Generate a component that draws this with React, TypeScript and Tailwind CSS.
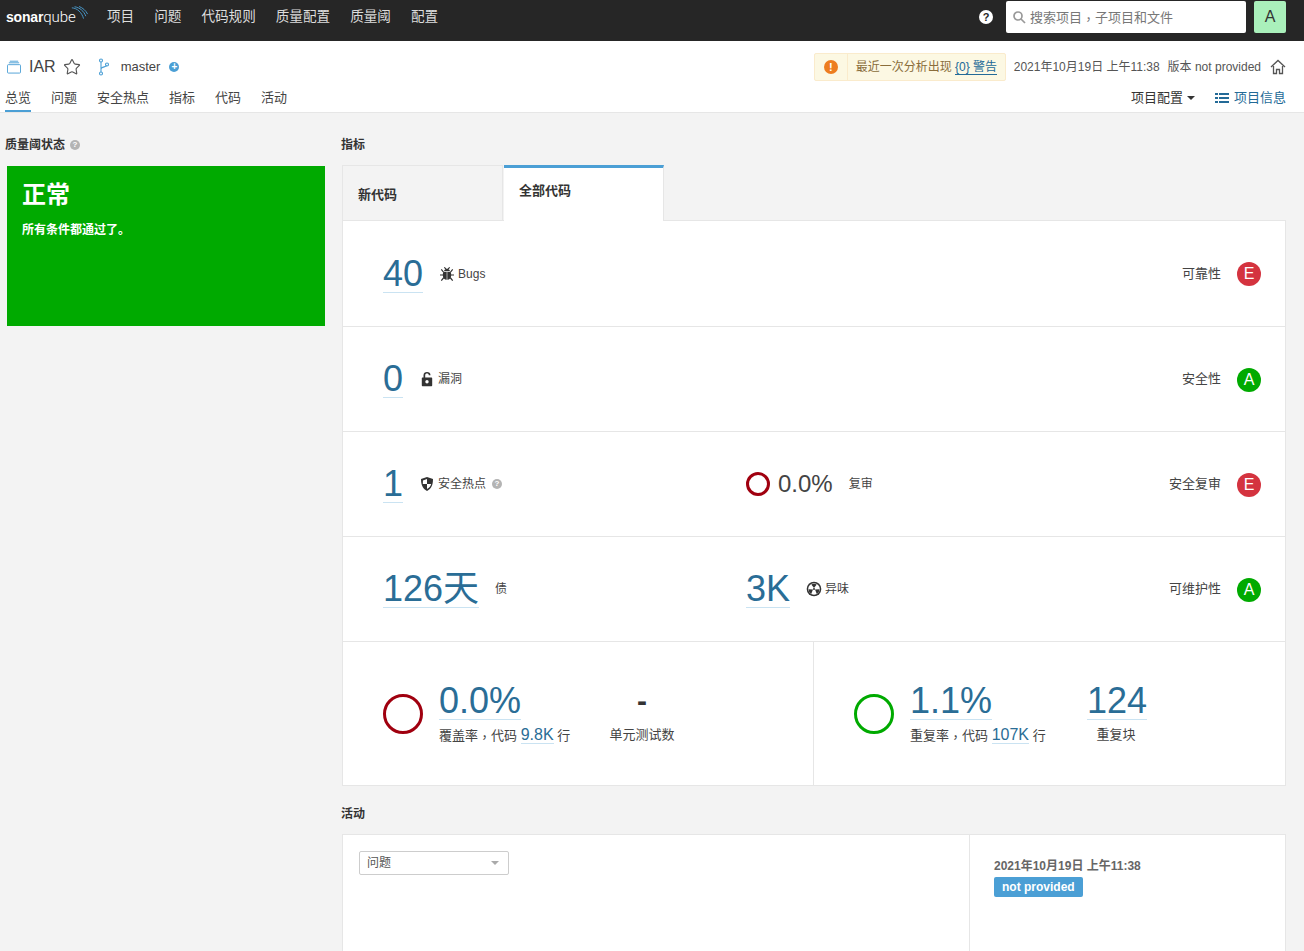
import React from 'react';
import { Star } from 'lucide-react';

const navItems = ['项目', '问题', '代码规则', '质量配置', '质量阈', '配置'];
const tabItems = ['总览', '问题', '安全热点', '指标', '代码', '活动'];

const BugIcon = () => (
  <svg className="w-4 h-4 shrink-0" viewBox="0 0 16 16" fill="#333">
    <path d="M5 5.200C5.200 3.700 6.500 2.800 8 2.800s2.800.9 3 2.400z" />
    <path d="M4.500 6h7c.5.8.7 1.800.7 2.900 0 2.800-1.700 4.800-3.700 4.800h-1c-2 0-3.700-2-3.700-4.800 0-1.100.2-2.100.7-2.900z" />
    <path d="M5.300 1.300l1.800 1.900M10.700 1.300L8.900 3.200M2.300 3.300l2.500 3.200M13.700 3.300l-2.500 3.200M1 9h3M15 9h-3M2.300 14.700l2.600-3.200M13.700 14.700l-2.600-3.200" stroke="#333" strokeWidth="1.200" fill="none" />
    <path d="M8 6v8" stroke="#fff" strokeWidth=".6" />
  </svg>
);

const LockIcon = () => (
  <svg className="w-4 h-4 shrink-0" viewBox="0 0 16 16" fill="#333">
    <path d="M4.500 6.500V4.200C4.500 2.200 6 1 8 1s3.500 1.200 3.500 3.200H9.800c0-1-.7-1.600-1.800-1.600s-1.800.6-1.800 1.600v2.300h6c.6 0 1 .4 1 1v6.700c0 .6-.4 1-1 1H3.800c-.6 0-1-.4-1-1V7.500c0-.6.4-1 1-1z" />
    <circle cx="8" cy="10.800" r="1.700" fill="#fff" />
  </svg>
);

const ShieldIcon = () => (
  <svg className="w-4 h-4 shrink-0" viewBox="0 0 16 16">
    <path d="M8 1l6 2.100c0 5.800-1.600 9.800-6 11.900C3.600 12.900 2 8.900 2 3.100z" fill="#333" />
    <path d="M8 3v5H3.800c.1-1.300.1-2.400.1-3.500zM8 8h4.200c-.6 2.300-2 3.900-4.200 5z" fill="#fff" />
  </svg>
);

const SmellIcon = () => (
  <svg className="w-4 h-4 shrink-0" viewBox="0 0 16 16">
    <circle cx="8" cy="8" r="7.300" fill="#333" />
    <circle cx="8" cy="8" r="5.800" fill="#fff" />
    <circle cx="8" cy="8" r="1" fill="#333" />
    <path d="M8 7L5.300 3.400A5.500 5.500 0 0 1 10.700 3.400zM9 8.500l4.500-.2a5.500 5.500 0 0 1-2.700 4.700zM7 8.500l-4.500-.2a5.500 5.500 0 0 0 2.700 4.700z" fill="#333" />
  </svg>
);

const HelpDot = ({ className }: { className: string }) => (
  <span className={`inline-flex items-center justify-center rounded-full bg-[#b4b4b4] text-white font-bold text-[8px] leading-none ${className}`}>?</span>
);

const Rating = ({ grade }: { grade: 'A' | 'E' }) => (
  <span
    className={`w-6 h-6 mt-[1px] rounded-full flex items-center justify-center text-white text-[16px] leading-none ${
      grade === 'A' ? 'bg-[#00aa00]' : 'bg-[#d4333f]'
    }`}
  >
    {grade}
  </span>
);

const BigLink = ({ children }: { children: React.ReactNode }) => (
  <span className="inline-block text-[36px] leading-[37px] text-[#2a6d96] border-b border-[#cae3f2] h-[38px] whitespace-nowrap">
    {children}
  </span>
);

// comma sits in the middle of the cell in the reference, which the TC font does
const Comma = () => <span className="font-['Noto_Sans_CJK_TC'] inline-block translate-y-[2px]">，</span>;

const MeasureRow = ({
  left,
  middle,
  label,
  grade,
  tall,
}: {
  left: React.ReactNode;
  middle?: React.ReactNode;
  label: string;
  grade: 'A' | 'E';
  tall?: boolean;
}) => (
  <div className={`${tall ? 'h-[106px]' : 'h-[105px]'} border-b border-[#e6e6e6] flex items-center pl-10 pr-6`}>
    <div className="w-[363px] flex items-center">{left}</div>
    <div className="flex-1 flex items-center">{middle}</div>
    <span className="text-[13px] text-[#444] mr-4">{label}</span>
    <Rating grade={grade} />
  </div>
);

export default function App() {
  return (
    <div
      className="h-[951px] overflow-hidden bg-[#f3f3f3] text-[#333]"
      style={{ fontFamily: '"Liberation Sans", "Noto Sans CJK SC", sans-serif' }}
    >
      <nav className="h-[41px] bg-[#262626] flex items-center pl-[6px] pr-[18px]">
        <div className="flex items-baseline w-[101px] relative -mt-[7px]">
          <span className="text-[14px] font-bold text-white leading-none tracking-[-0.2px]">sonar</span>
          <span className="text-[15px] font-light font-['Roboto'] text-white leading-none">qube</span>
          <svg className="absolute left-[64px] -top-[4px] w-[19px] h-[18px]" viewBox="0 0 19 20" fill="none" stroke="#4b9fd5" strokeWidth="1">
            <path d="M1 2c6 .5 11 5 13 12" />
            <path d="M4 .8c6 1 10.500 5 12.500 10.500" />
            <path d="M9 .5c4 1.500 7.500 4.500 9.500 8.500" />
          </svg>
        </div>
        <div className="flex items-center gap-5">
          {navItems.map((item) => (
            <span key={item} className="text-[13.600px] text-[#dddddd] -mt-[7px]">{item}</span>
          ))}
        </div>
        <div className="ml-auto flex items-center">
          <span className="w-[14px] h-[14px] rounded-full bg-white text-[#262626] text-[11px] font-bold flex items-center justify-center mr-[13px] -mt-[7px]">?</span>
          <div className="w-[240px] h-[32px] bg-white rounded-[2px] flex items-center pl-[6px] -mt-[7px]">
            <svg className="w-[14px] h-[14px]" viewBox="0 0 14 14" fill="none" stroke="#999" strokeWidth="1.700">
              <circle cx="6" cy="6" r="4" />
              <path d="M9 9l4 4" />
            </svg>
            <span className="text-[13px] text-[#777] ml-[4px]">搜索项目<Comma />子项目和文件</span>
          </div>
          <span className="w-[32px] h-[32px] ml-2 rounded-[2px] bg-[#aaf0bb] text-[#333] text-[16px] flex items-center justify-center -mt-[7px]">A</span>
        </div>
      </nav>

      <header className="h-[72px] bg-white border-b border-[#e6e6e6] pl-[6px] pr-[18px]">
        <div className="h-[40px] pt-[12px] flex items-center">
          <svg className="ml-px w-[14px] h-[14px] mt-[-1px]" viewBox="0 0 15 14" fill="none" stroke="#4b9fd5" strokeWidth="1">
            <rect x=".5" y="4.500" width="14" height="9" rx="1" />
            <path d="M2 2.500h11M3 .8h9" />
          </svg>
          <span className="text-[16px] text-[#444] ml-[8px]">IAR</span>
          <Star className="w-[18px] h-[18px] ml-[7px] text-[#555]" strokeWidth={1.500} />
          <svg className="w-[12px] h-[18px] ml-[17px]" viewBox="0 0 12 18" fill="none" stroke="#4b9fd5" strokeWidth="1.100">
            <circle cx="3" cy="2.500" r="1.500" />
            <circle cx="3" cy="15.500" r="1.500" />
            <circle cx="9" cy="6.500" r="1.500" />
            <path d="M3 4v10M3 11c0-2 5-2 6-3.500" />
          </svg>
          <span className="text-[13px] text-[#444] ml-[11px]">master</span>
          <span className="w-[10px] h-[10px] rounded-full bg-[#4b9fd5] text-white ml-[9px] flex items-center justify-center text-[10px] font-bold leading-none">+</span>
          <div className="ml-auto flex items-center">
            <div className="h-[28px] w-[192px] flex items-center border border-[#faebcc] bg-[#fcf8e3] rounded-[2px]">
              <span className="w-[33px] h-full border-r border-[#faebcc] flex items-center justify-center">
                <span className="w-[14px] h-[14px] rounded-full bg-[#ed7d20] text-white text-[11px] font-bold flex items-center justify-center leading-none">!</span>
              </span>
              <span className="text-[12px] text-[#8a6d3b] ml-2 whitespace-nowrap">
                最近一次分析出现 <span className="text-[#236a97] border-b border-[#236a97]">{'{0}'} 警告</span>
              </span>
            </div>
            <span className="text-[12px] text-[#555] ml-[8px]">2021年10月19日 上午11:38</span>
            <span className="text-[12px] text-[#555] ml-[8px]">版本 not provided</span>
            <svg className="w-4 h-4 ml-[9px]" viewBox="0 0 16 16" fill="none" stroke="#555" strokeWidth="1.300">
              <path d="M1 8l7-6.500L15 8M3.500 7v7.500h3v-4h3v4h3V7" />
            </svg>
          </div>
        </div>
        <div className="flex items-start justify-between h-[31px]">
          <div className="flex gap-5 pt-[7px] -ml-px">
            {tabItems.map((tab, i) => (
              <span
                key={tab}
                className={`text-[13px] h-[24px] leading-[20px] text-[#444] ${i === 0 ? 'border-b-2 border-[#4b9fd5]' : ''}`}
              >
                {tab}
              </span>
            ))}
          </div>
          <div className="flex items-center pt-[7px]">
            <span className="text-[13px] leading-[20px] text-[#333]">项目配置</span>
            <span className="ml-[4px] w-0 h-0 border-x-[4px] border-x-transparent border-t-[4px] border-t-[#333]" />
            <svg className="w-[14px] h-[12px] ml-5" viewBox="0 0 14 12" fill="#236a97">
              <path d="M0 1h3v2H0zM4 1h10v2H4zM0 5h3v2H0zM4 5h10v2H4zM0 9h3v2H0zM4 9h10v2H4z" />
            </svg>
            <span className="text-[13px] leading-[20px] text-[#236a97] ml-[5px]">项目信息</span>
          </div>
        </div>
      </header>

      <main className="flex pl-[6px] pr-[18px] pt-[24px] items-start">
        <section className="w-[336px] shrink-0">
          <h3 className="text-[12px] leading-4 font-bold text-[#333] flex items-center -ml-px">
            质量阈状态
            <HelpDot className="w-[10px] h-[10px] ml-[5px]" />
          </h3>
          <div className="ml-px mt-[13px] w-[318px] h-[160px] bg-[#00aa00] text-white pl-[15px] pt-[13px]">
            <div className="text-[24px] leading-[32px] font-bold">正常</div>
            <div className="text-[12px] leading-4 font-bold mt-[11px]">所有条件都通过了。</div>
          </div>
        </section>

        <section className="flex-1 min-w-0">
          <h3 className="text-[12px] leading-4 font-bold text-[#333] -ml-px">指标</h3>
          <div className="flex mt-[12px] h-[55px]">
            <div className="w-[161px] h-[55px] border border-[#e6e6e6] border-b-0 bg-[#f3f3f3] text-[13px] font-bold text-[#333] pl-[15px] pt-[21px] leading-4">新代码</div>
            <div className="w-[160px] h-[56px] ml-px border-t-[3px] border-[#4b9fd5] border-r border-r-[#e6e6e6] bg-white text-[13px] font-bold text-[#333] pl-[15px] pt-[15px] leading-4 relative z-10">全部代码</div>
          </div>
          <div className="bg-white border border-[#e6e6e6]">
            <MeasureRow
              tall
              left={
                <>
                  <BigLink>40</BigLink>
                  <span className="ml-4"><BugIcon /></span>
                  <span className="text-[12px] text-[#444] ml-[3px]">Bugs</span>
                </>
              }
              label="可靠性"
              grade="E"
            />
            <MeasureRow
              left={
                <>
                  <BigLink>0</BigLink>
                  <span className="ml-4"><LockIcon /></span>
                  <span className="text-[12px] text-[#444] ml-[3px]">漏洞</span>
                </>
              }
              label="安全性"
              grade="A"
            />
            <MeasureRow
              left={
                <>
                  <BigLink>1</BigLink>
                  <span className="ml-4"><ShieldIcon /></span>
                  <span className="text-[12px] text-[#444] ml-[3px]">安全热点</span>
                  <HelpDot className="w-[10px] h-[10px] ml-[6px]" />
                </>
              }
              middle={
                <>
                  <span className="w-6 h-6 rounded-full border-[3px] border-[#a0000f]" />
                  <span className="text-[24px] text-[#444] ml-2">0.0%</span>
                  <span className="text-[12px] text-[#444] ml-4">复审</span>
                </>
              }
              label="安全复审"
              grade="E"
            />
            <MeasureRow
              left={
                <>
                  <BigLink>126天</BigLink>
                  <span className="text-[12px] text-[#444] ml-4">债</span>
                </>
              }
              middle={
                <>
                  <BigLink>3K</BigLink>
                  <span className="ml-4"><SmellIcon /></span>
                  <span className="text-[12px] text-[#444] ml-[3px]">异味</span>
                </>
              }
              label="可维护性"
              grade="A"
            />
            <div className="flex h-[143px]">
              <div className="w-[471px] border-r border-[#e6e6e6] flex items-center pl-10">
                <span className="w-10 h-10 rounded-full border-[3px] border-[#a0000f] shrink-0" />
                <div className="ml-4 w-[171px]">
                  <BigLink>0.0%</BigLink>
                  <div className="text-[13px] leading-5 text-[#444] mt-[5px] whitespace-nowrap">
                    覆盖率<Comma />代码 <span className="text-[16px] text-[#2a6d96] border-b border-[#cae3f2]">9.8K</span> 行
                  </div>
                </div>
                <div className="w-[66px] -ml-px flex flex-col items-center">
                  <span className="text-[30px] leading-[38px] font-bold text-[#333] h-[38px]">-</span>
                  <span className="text-[13px] leading-5 text-[#444] mt-[5px] whitespace-nowrap">单元测试数</span>
                </div>
              </div>
              <div className="flex-1 flex items-center pl-10">
                <span className="w-10 h-10 rounded-full border-[3px] border-[#00aa00] shrink-0" />
                <div className="ml-4 w-[177px]">
                  <BigLink>1.1%</BigLink>
                  <div className="text-[13px] leading-5 text-[#444] mt-[5px] whitespace-nowrap">
                    重复率<Comma />代码 <span className="text-[16px] text-[#2a6d96] border-b border-[#cae3f2]">107K</span> 行
                  </div>
                </div>
                <div className="flex flex-col items-center">
                  <BigLink>124</BigLink>
                  <span className="text-[13px] leading-5 text-[#444] mt-[5px] -ml-[2px]">重复块</span>
                </div>
              </div>
            </div>
          </div>

          <h3 className="text-[12px] leading-4 font-bold text-[#333] mt-5 -ml-px">活动</h3>
          <div className="mt-3 h-[140px] flex bg-white border border-[#e6e6e6]">
            <div className="w-[627px] border-r border-[#e6e6e6] pl-4 pt-4">
              <div className="w-[150px] h-6 border border-[#cdcdcd] rounded-[2px] flex items-center justify-between pl-[7px] pr-[9px]">
                <span className="text-[12px] text-[#555]">问题</span>
                <span className="w-0 h-0 border-x-[4px] border-x-transparent border-t-[4px] border-t-[#aaa]" />
              </div>
            </div>
            <div className="pl-6 pt-[23px]">
              <div className="text-[12px] leading-4 font-bold text-[#666]">2021年10月19日 上午11:38</div>
              <span className="inline-block mt-[3px] h-5 px-2 leading-5 rounded-[2px] bg-[#4b9fd5] text-white text-[12px] font-bold">not provided</span>
            </div>
          </div>
        </section>
      </main>
    </div>
  );
}
